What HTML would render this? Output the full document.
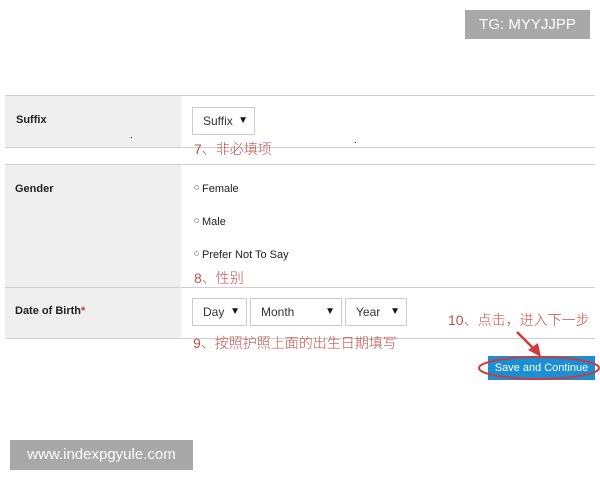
<!DOCTYPE html>
<html><head><meta charset="utf-8"><style>
body{margin:0;width:600px;height:480px;background:#fff;position:relative;overflow:hidden;font-family:"Liberation Sans",Arial,sans-serif;}
.a{position:absolute}
.g{background:#efefef}
.l{position:absolute;height:1px;background:#cfcfcf}
.lab{font-size:11px;font-weight:bold;color:#222}
.sel{position:absolute;border:1px solid #ccc;background:#fff;font-size:12px;color:#333;box-sizing:border-box;height:28px;line-height:26px;padding-left:10px}
.sel span{position:absolute;right:6px;top:0;font-size:10px;color:#111}
.red{color:#c0504d;font-family:"Liberation Sans","Noto Sans CJK SC",sans-serif;font-size:14px;font-weight:300}
.opt{font-size:11px;color:#222}
.opt:before{content:"";display:inline-block;width:3px;height:3px;border:1px solid #aaa;border-radius:50%;margin-right:3px;vertical-align:2px}
</style></head><body>
<div class="a" style="left:465px;top:10px;width:125px;height:29px;background:#a8a8a8;color:#fff;font-size:15px;line-height:29px;text-align:center">TG: MYYJJPP</div>

<div class="a g" style="left:5px;top:95px;width:176px;height:52px"></div>
<div class="a g" style="left:5px;top:164px;width:176px;height:174px"></div>
<div class="l" style="left:5px;top:95px;width:590px"></div>
<div class="l" style="left:5px;top:147px;width:590px"></div>
<div class="l" style="left:5px;top:164px;width:590px"></div>
<div class="l" style="left:5px;top:287px;width:590px"></div>
<div class="l" style="left:5px;top:338px;width:590px"></div>

<div class="a lab" style="left:16px;top:114px">Suffix</div>
<div class="a" style="left:130px;top:130px;font-size:10px">.</div>
<div class="a" style="left:354px;top:135px;font-size:10px">.</div>
<div class="sel" style="left:192px;top:107px;width:63px">Suffix<span>▼</span></div>
<div class="a red" style="left:194px;top:139px">7、非必填项</div>

<div class="a lab" style="left:15px;top:183px">Gender</div>
<div class="a opt" style="left:194px;top:183px">Female</div>
<div class="a opt" style="left:194px;top:216px">Male</div>
<div class="a opt" style="left:194px;top:249px">Prefer Not To Say</div>
<div class="a red" style="left:194px;top:268px">8、性别</div>

<div class="a lab" style="left:15px;top:305px">Date of Birth<span style="color:#c0392b">*</span></div>
<div class="sel" style="left:192px;top:298px;width:55px">Day<span>▼</span></div>
<div class="sel" style="left:250px;top:298px;width:92px">Month<span>▼</span></div>
<div class="sel" style="left:345px;top:298px;width:62px">Year<span>▼</span></div>
<div class="a red" style="left:193px;top:333px">9、按照护照上面的出生日期填写</div>
<div class="a red" style="left:448px;top:310px">10、点击，进入下一步</div>

<div class="a" style="left:488px;top:356px;width:107px;height:24px;background:#1a8fd6;color:#fff;font-size:11px;line-height:24px;text-align:center">Save and Continue</div>
<svg class="a" style="left:0;top:0" width="600" height="480">
<ellipse cx="539" cy="368" rx="60" ry="11" fill="none" stroke="#d03a3a" stroke-width="2"/>
<line x1="517" y1="332" x2="535" y2="350" stroke="#d03a3a" stroke-width="2.5"/>
<polygon points="528,350 541,357 538,343" fill="#d03a3a"/>
</svg>

<div class="a" style="left:10px;top:440px;width:183px;height:30px;background:#a8a8a8;color:#fff;font-size:15px;line-height:30px;text-align:center">www.indexpgyule.com</div>
</body></html>
